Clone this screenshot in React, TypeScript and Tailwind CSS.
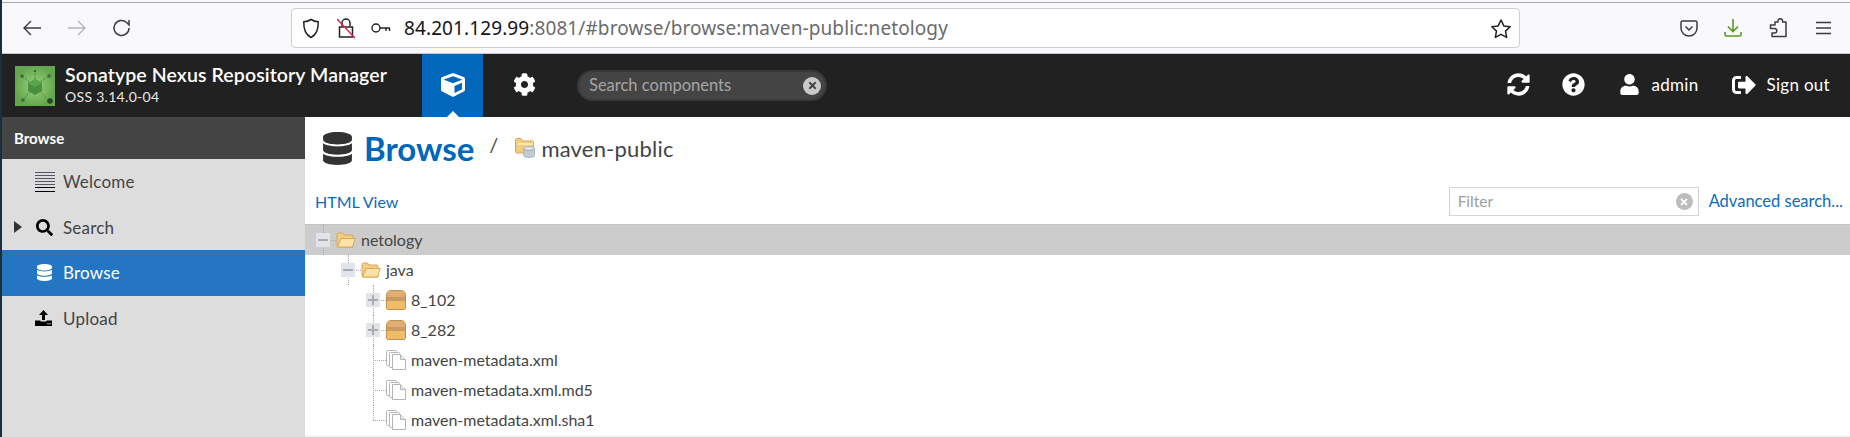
import { FaCog, FaCube, FaDatabase, FaQuestionCircle, FaSearch, FaSignOutAlt, FaSyncAlt, FaTimes, FaUser } from "react-icons/fa";

const nexusFont = "font-['Lato','Open_Sans',sans-serif]";

function BrowserBar() {
  return (
    <div className="flex h-[54px] shrink-0 items-center border-b border-[#c8c8cc] border-t-0 bg-[#f9f9fb] pt-[3px] relative">
      <div className="absolute left-0 right-0 top-[2px] h-px bg-[#a8a8aa]" />
      <div className="flex w-[289px] items-center pl-[20px]">
        <svg width="20" height="18" viewBox="0 0 20 18" fill="none" stroke="#3c3c40" strokeWidth="1.4">
          <path d="M19 9H2M9 2 2 9l7 7" />
        </svg>
        <svg className="ml-[25px]" width="20" height="18" viewBox="0 0 20 18" fill="none" stroke="#b4b4b8" strokeWidth="1.4">
          <path d="M1 9h17M11 2l7 7-7 7" />
        </svg>
        <svg className="ml-[25px]" width="20" height="20" viewBox="0 0 20 20" fill="none" stroke="#3c3c40" strokeWidth="1.5">
          <path d="M17 10a7.500 7.500 0 1 1-2.400-5.500L17 7V2" />
        </svg>
      </div>
      <div className="flex h-[40px] w-[1229px] items-center rounded-[4px] border border-[#cfcfd3] bg-white pl-[10px] pr-[7px]">
        <svg width="18" height="21" viewBox="0 0 18 21" fill="none" stroke="#222" strokeWidth="1.5">
          <path d="M9 1.500c2.500 1.600 5 2.200 7.200 2.300C16.500 11 14 17 9 19.500 4 17 1.500 11 1.800 3.800 4 3.700 6.500 3.100 9 1.500Z" />
        </svg>
        <svg className="ml-[17px]" width="18" height="22" viewBox="0 0 18 22" fill="none" strokeWidth="1.5">
          <path d="M5 9V6a4 4 0 0 1 8 0v3M2.500 10h13v10h-13Z" stroke="#222" />
          <path d="M0 2l18 19" stroke="#e0224f" />
        </svg>
        <svg className="ml-[16px]" width="20" height="12" viewBox="0 0 20 12" fill="none" stroke="#222" strokeWidth="1.4">
          <circle cx="5" cy="6" r="4" />
          <path d="M9 6h10M15 6v3M18.500 6v3" />
        </svg>
        <div className="ml-[13px] flex-1 font-['Noto_Sans',sans-serif] text-[19px] tracking-[0.1px] text-[#6b6b6e]">
          <span className="text-[#15141a]">84.201.129.99</span>:8081/#browse/browse:maven-public:netology
        </div>
        <svg width="22" height="21" viewBox="0 0 22 21" fill="none" stroke="#222" strokeWidth="1.5" strokeLinejoin="round">
          <path d="m11 2 2.800 5.900 6.400.8-4.700 4.400 1.200 6.300L11 16.300l-5.700 3.100 1.200-6.300L1.800 8.700l6.400-.8Z" />
        </svg>
      </div>
      <div className="flex flex-1 items-center pl-[160px]">
        <svg width="18" height="17" viewBox="0 0 18 17" fill="none" stroke="#3c3c40" strokeWidth="1.5">
          <path d="M2.500 1h13A1.500 1.500 0 0 1 17 2.500V8a8 8 0 0 1-16 0V2.500A1.500 1.500 0 0 1 2.500 1Z" />
          <path d="m5.500 6.500 3.500 3.500 3.500-3.500" />
        </svg>
        <svg className="ml-[26px]" width="18" height="18" viewBox="0 0 18 18" fill="none" stroke="#5a9a1e" strokeWidth="1.6">
          <path d="M9 0v12M4 7.500l5 5 5-5M1 13v2.500c0 .8.700 1.500 1.500 1.500h13c.8 0 1.500-.7 1.500-1.500V13" />
        </svg>
        <svg className="ml-[27px]" width="18" height="20" viewBox="0 0 18 20" fill="none" stroke="#3c3c40" strokeWidth="1.5" strokeLinejoin="round">
          <path d="M6 4h3V3a2.300 2.300 0 0 1 4.600 0v1H17v14.500H3V15h2.500a2.300 2.300 0 0 0 0-4.600H1.500V7H6Z" />
        </svg>
        <svg className="ml-[28px]" width="17" height="14" viewBox="0 0 17 14" fill="none" stroke="#3c3c40" strokeWidth="1.5">
          <path d="M1 1.500h15M1 7h15M1 12.500h15" />
        </svg>
      </div>
    </div>
  );
}

function NexusLogo() {
  const arms = ["M20 20 20 6", "M20 20 8 11", "M20 20 32 11", "M20 20 9 33", "M20 20 33 34"];
  return (
    <svg width="40" height="40" viewBox="0 0 40 40" className="shrink-0">
      <defs>
        <radialGradient id="logoBg">
          <stop offset="0" stopColor="#98d47c" />
          <stop offset="1" stopColor="#64a64e" />
        </radialGradient>
      </defs>
      <rect width="40" height="40" fill="url(#logoBg)" />
      {arms.map((d) => (
        <path key={d} d={d} stroke="#4c7f40" strokeWidth="1" strokeDasharray="2 1.500" />
      ))}
      <circle cx="20" cy="5" r="1.300" fill="#3f6b36" />
      <circle cx="7" cy="10" r="1.800" fill="#3f6b36" />
      <circle cx="34" cy="10" r="1.800" fill="#3f6b36" />
      <circle cx="8" cy="34" r="1.800" fill="#3f6b36" />
      <circle cx="35" cy="35" r="2.800" fill="#2b4726" />
      <path d="m20 13 7 4v8l-7 4-7-4v-8Z" fill="#4a8f40" />
      <path d="m20 13 7 4-7 4-7-4Z" fill="#5aa64e" />
    </svg>
  );
}

function Header() {
  return (
    <div className={`flex h-[63px] shrink-0 items-center bg-[#212121] text-white ${nexusFont}`}>
      <div className="flex w-[420px] items-center pl-[13px]">
        <NexusLogo />
        <div className="ml-[10px] -mt-[3px]">
          <div className="text-[19.500px] font-semibold leading-[23px] tracking-[0.1px]">Sonatype Nexus Repository Manager</div>
          <div className="mt-[2px] text-[14px] leading-[18px] tracking-[0.3px] text-[#e8e8e8]">OSS 3.14.0-04</div>
        </div>
      </div>
      <div className="relative flex h-full w-[61px] items-center justify-center bg-[#0067bb] pb-[2px]">
        <FaCube className="text-[24px]" />
        <div className="absolute bottom-0 left-1/2 h-0 w-0 -translate-x-1/2 border-x-[6px] border-b-[6px] border-x-transparent border-b-white" />
      </div>
      <div className="flex h-full w-[83px] items-center justify-center pb-[2px]">
        <FaCog className="text-[23px]" />
      </div>
      <div className="ml-[11px] flex h-[31px] w-[250px] items-center justify-between rounded-full border-2 border-[#383838] bg-[#444] pl-[10px] pr-[4px]">
        <span className="text-[16.500px] text-[#a5a5a5]">Search components</span>
        <span className="flex h-[18px] w-[18px] items-center justify-center rounded-full bg-[#c9c9c9] text-[#444]">
          <FaTimes className="text-[11px]" />
        </span>
      </div>
      <div className="flex flex-1 items-center justify-end pb-[2px] pr-[20px] text-[17px] tracking-[0.3px]">
        <FaSyncAlt className="text-[23px]" />
        <FaQuestionCircle className="ml-[32px] text-[23px]" />
        <FaUser className="ml-[34px] text-[21px]" />
        <span className="ml-[11px]">admin</span>
        <FaSignOutAlt className="ml-[34px] text-[24px]" />
        <span className="ml-[10px]">Sign out</span>
      </div>
    </div>
  );
}

function NavItem({ label, icon, active, arrow }: { label: string; icon: React.ReactNode; active?: boolean; arrow?: boolean }) {
  return (
    <div className={`flex h-[45.500px] items-center ${active ? "bg-[#2476c3] text-white" : "text-[#444]"}`}>
      <div className="flex w-[12px]" />
      <div className="flex w-[21px] items-center">
        {arrow && <div className="h-0 w-0 border-y-[6px] border-l-[8px] border-y-transparent border-l-[#333]" />}
      </div>
      <div className={`flex w-[28px] items-center ${active ? "text-white" : "text-black"}`}>{icon}</div>
      <span className="text-[17px] tracking-[0.2px]">{label}</span>
    </div>
  );
}

function WelcomeIcon() {
  return (
    <svg width="20" height="20" viewBox="0 0 20 20" stroke="#222" strokeWidth="1">
      {[0.5, 3.500, 6.500, 9.500, 12.500, 15.500, 19.500].map((y) => (
        <path key={y} d={`M0 ${y}h20`} stroke={y === 19.500 || y === 15.500 ? "#000" : "#556"} />
      ))}
    </svg>
  );
}

function UploadIcon() {
  return (
    <svg width="17" height="16" viewBox="0 0 17 16" fill="#000">
      <path d="M8.500 0 13 5h-3v5H7V5H4Z" />
      <path d="M0 10.500h5.500v1h6v-1H17V16H0Z" />
      <circle cx="13" cy="13.700" r=".7" fill="#ddd" />
      <circle cx="15" cy="13.700" r=".7" fill="#ddd" />
    </svg>
  );
}

function Sidebar() {
  return (
    <div className={`flex w-[303px] shrink-0 flex-col bg-[#ddd] ${nexusFont}`}>
      <div className="flex h-[42px] items-center bg-[#444] pl-[12px] text-[15px] font-bold text-white">Browse</div>
      <NavItem label="Welcome" icon={<WelcomeIcon />} />
      <NavItem label="Search" arrow icon={<FaSearch className="ml-px text-[17px]" />} />
      <NavItem label="Browse" active icon={<FaDatabase className="ml-px text-[17px]" />} />
      <NavItem label="Upload" icon={<UploadIcon />} />
    </div>
  );
}

function FolderIcon({ open }: { open?: boolean }) {
  return (
    <svg width="20" height="16" viewBox="0 0 20 16" className="shrink-0">
      <path d="M1 2.500C1 1.700 1.700 1 2.500 1h4L8 3h7.500c.8 0 1.500.7 1.500 1.500V15H2.500C1.700 15 1 14.300 1 13.500Z" fill="#f3cd80" stroke="#d9a55a" />
      {open && <path d="M5 6.500h14.200L16.500 15H1.500Z" fill="#fbe3a8" stroke="#d9a55a" strokeLinejoin="round" />}
    </svg>
  );
}

function BoxIcon() {
  return (
    <svg width="20" height="20" viewBox="0 0 20 20" className="shrink-0">
      <path d="M.5 18V5C.5 2.500 2.500.5 5 .5h10c2.500 0 4.500 2 4.500 4.500v13c0 .8-.7 1.500-1.500 1.500H2c-.8 0-1.500-.7-1.500-1.500Z" fill="#efbc68" stroke="#c4904f" />
      <path d="M1 5C1 2.800 2.800 1 5 1h10c2.200 0 4 1.800 4 4v2H1Z" fill="#e0ad72" />
      <rect x="1" y="7" width="18" height="4" fill="#c99a62" />
    </svg>
  );
}

function FilesIcon() {
  return (
    <svg width="20" height="20" viewBox="0 0 20 20" className="shrink-0" fill="#fff" stroke="#b5b5b5">
      <rect x=".5" y=".5" width="10" height="15" rx="1" />
      <rect x="3.500" y="2.500" width="10" height="15" rx="1" />
      <path d="M6.500 4.500h8l5 5v10h-13Z" />
      <path d="M14.500 4.500v5h5" fill="#e8e8e8" />
    </svg>
  );
}

function Expander({ plus }: { plus?: boolean }) {
  return (
    <div className="relative h-[14px] w-[14px] shrink-0 bg-[#e1e4ea]">
      <div className="absolute left-[2px] right-[2px] top-[6px] h-[2px] bg-[#a8abb2]" />
      {plus && <div className="absolute bottom-[2px] left-[6px] top-[2px] w-[2px] bg-[#a8abb2]" />}
    </div>
  );
}

type Row = { label: string; level: number; icon: React.ReactNode; exp?: "plus" | "minus"; selected?: boolean; last?: boolean };

const rows: Row[] = [
  { label: "netology", level: 0, icon: <FolderIcon open />, exp: "minus", selected: true },
  { label: "java", level: 1, icon: <FolderIcon open />, exp: "minus" },
  { label: "8_102", level: 2, icon: <BoxIcon />, exp: "plus" },
  { label: "8_282", level: 2, icon: <BoxIcon />, exp: "plus" },
  { label: "maven-metadata.xml", level: 2, icon: <FilesIcon /> },
  { label: "maven-metadata.xml.md5", level: 2, icon: <FilesIcon /> },
  { label: "maven-metadata.xml.sha1", level: 2, icon: <FilesIcon />, last: true },
];

function TreeRow({ row }: { row: Row }) {
  // dotted connector sits in the 25px cell in front of the icon
  return (
    <div
      className={`flex h-[30px] items-center ${row.selected ? "bg-[#ccc]" : ""} ${row.level === 0 ? "pl-[11px]" : row.level === 1 ? "pl-[36px]" : "pl-[61px]"}`}
    >
      <div className="relative flex h-full w-[20px] shrink-0 items-center">
        <div className={`absolute left-[7px] top-0 border-l border-dotted border-[#aaa] ${row.last ? "h-[15px]" : "h-full"}`} />
        <div className="absolute left-[7px] right-0 top-[15px] border-t border-dotted border-[#aaa]" />
        {row.exp && <Expander plus={row.exp === "plus"} />}
      </div>
      {row.icon}
      <span className="ml-[5px] text-[16px] text-[#444]">{row.label}</span>
    </div>
  );
}

function Content() {
  return (
    <div className={`flex min-w-0 flex-1 flex-col bg-white ${nexusFont}`}>
      <div className="flex h-[62px] shrink-0 items-center pl-[16px]">
        <FaDatabase className="text-[33px] text-[#333]" />
        <span className="ml-[10px] text-[33px] font-bold leading-none text-[#0067bb]">Browse</span>
        <span className="ml-[15px] -mt-[8px] text-[20px] text-[#444]">/</span>
        <span className="ml-[17px] flex items-center">
          <svg width="20" height="20" viewBox="0 0 20 20">
            <path d="M.5 2c0-.8.700-1.500 1.500-1.500h4L7.500 3H17c.8 0 1.500.7 1.500 1.500V15H2c-.8 0-1.500-.7-1.500-1.500Z" fill="#f3cd80" stroke="#d9a55a" />
            <path d="M3 6h15" stroke="#fdeab8" strokeWidth="2" />
            <ellipse cx="14" cy="10.500" rx="5.500" ry="2" fill="#dfe3e8" stroke="#9aa5b1" strokeWidth=".7" />
            <path d="M8.500 10.500v7c0 1.100 2.500 2 5.500 2s5.500-.9 5.500-2v-7c0 1.100-2.500 2-5.500 2s-5.500-.9-5.500-2Z" fill="#c3cad2" stroke="#9aa5b1" strokeWidth=".7" />
          </svg>
          <span className="ml-[6px] text-[22px] tracking-[0.2px] text-[#444]">maven-public</span>
        </span>
      </div>
      <div className="flex h-[46px] shrink-0 items-start border-b border-[#c4c4c4]">
        <div className="flex w-full items-center pl-[10px] pr-[7px] pt-[8px]">
          <span className="text-[16px] text-[#0a6cc0]">HTML View</span>
          <div className="ml-auto flex h-[29px] w-[250px] items-center justify-between border border-[#d4d4d4] bg-white pl-[8px] pr-[5px] text-[15.500px] text-[#9e9e9e]">
            Filter
            <span className="flex h-[17px] w-[17px] items-center justify-center rounded-full bg-[#bdbdbd] text-white">
              <FaTimes className="text-[10px]" />
            </span>
          </div>
          <span className="ml-[10px] text-[16.500px] text-[#0a6cc0]">Advanced search...</span>
        </div>
      </div>
      <div className="flex-1">
        {rows.map((row) => (
          <TreeRow key={row.label} row={row} />
        ))}
      </div>
      <div className="h-[2px] shrink-0 bg-[#f4f4f4]" />
    </div>
  );
}

export default function App() {
  return (
    <div className="flex h-[437px] w-[1850px] overflow-hidden bg-white">
      <div className="w-[2px] shrink-0 bg-[#1b2f3a]" />
      <div className="flex min-w-0 flex-1 flex-col">
        <BrowserBar />
        <Header />
        <div className="flex min-h-0 flex-1">
          <Sidebar />
          <Content />
        </div>
      </div>
    </div>
  );
}
